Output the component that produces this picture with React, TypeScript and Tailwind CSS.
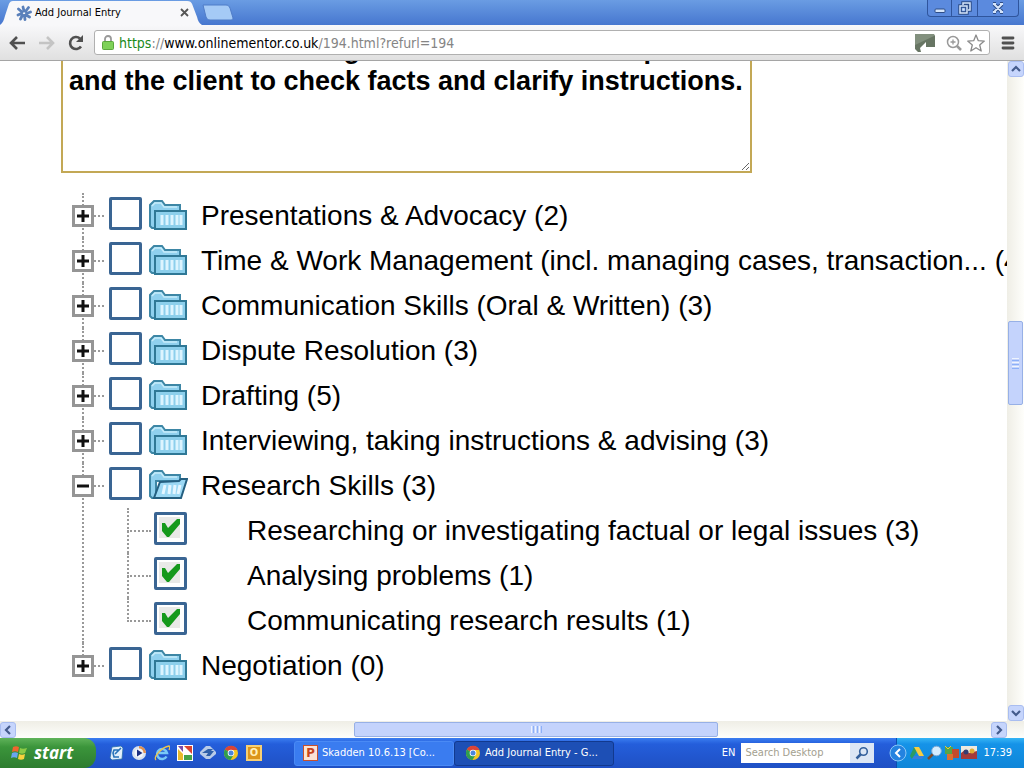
import type { ReactNode } from 'react';

const skills = [
  { name: 'Presentations & Advocacy', count: 2 },
  { name: 'Time & Work Management (incl. managing cases, transaction...', count: 4 },
  { name: 'Communication Skills (Oral & Written)', count: 3 },
  { name: 'Dispute Resolution', count: 3 },
  { name: 'Drafting', count: 5 },
  { name: 'Interviewing, taking instructions & advising', count: 3 },
  {
    name: 'Research Skills',
    count: 3,
    open: true,
    items: [
      { name: 'Researching or investigating factual or legal issues', count: 3 },
      { name: 'Analysing problems', count: 1 },
      { name: 'Communicating research results', count: 1 },
    ],
  },
  { name: 'Negotiation', count: 0 },
];

const notes =
  'I also had one meeting with the trainees and partner\nand the client to check facts and clarify instructions.';

function Folder({ open = false }: { open?: boolean }) {
  return (
    <svg viewBox="0 0 40 32" className="h-8 w-10 shrink-0" aria-hidden="true">
      <path d="M2 28V7l4-4h8l3 4h15v6H8v17H4z" fill="#8fd0ee" stroke="#3d86a5" strokeWidth="2" />
      <path d="M4 8l3-3h6l3 4h13" fill="none" stroke="#c6ebfa" strokeWidth="1.5" />
      {open ? (
        <>
          <path d="M12 14l19-1 2-2h6l-6 19H6z" fill="#9bd8f4" stroke="#245f80" strokeWidth="2" />
          <path d="M17 17l-2 9M22 17l-1 9M27 17l-1 9M32 17l-2 9" stroke="#e4f6ff" strokeWidth="3" />
        </>
      ) : (
        <>
          <path d="M7 13h31v18H7z" fill="#8ccfec" stroke="#2f7896" strokeWidth="2" />
          <path d="M14 17v10M19 17v10M24 17v10M29 17v10M33 17v10" stroke="#dcf4ff" strokeWidth="3" />
        </>
      )}
    </svg>
  );
}

function Check({ label, checked = false }: { label: string; checked?: boolean }) {
  return (
    <span className="relative size-[33px] shrink-0">
      <input
        type="checkbox"
        id={label}
        defaultChecked={checked}
        className="peer block size-full appearance-none rounded-[2px] border-[3px] border-[#3a6593] bg-white"
      />
      <svg viewBox="0 0 33 33" className="pointer-events-none absolute inset-0 hidden peer-checked:block" aria-hidden="true">
        <path d="M5 5h21v21H5z" fill="#e9e9e7" />
        <path d="M8 11h3l3 5 9-9h3v5L15 25h-2l-5-6z" fill="#16991c" />
      </svg>
    </span>
  );
}

function Tree() {
  return (
    <ul className="ml-[72px] mt-5 font-['Liberation_Sans',sans-serif] text-[28px] leading-[45px] text-black">
      {skills.map((skill, i) => (
        <li key={skill.name} className="relative">
          <span
            className={
              i === skills.length - 1
                ? 'absolute left-2.5 top-0 h-6 border-l-2 border-dotted border-[#999]'
                : 'absolute left-2.5 top-0 h-full border-l-2 border-dotted border-[#999]'
            }
          />
          <div className="flex h-[45px] items-center whitespace-nowrap">
            <button
              type="button"
              aria-label={skill.open ? 'Collapse' : 'Expand'}
              className="relative flex size-[22px] shrink-0 items-center justify-center border-[3px] border-[#959595] bg-white"
            >
              <svg viewBox="0 0 16 16" className="size-4 shrink-0" aria-hidden="true">
                <path d={skill.open ? 'M2 8h12' : 'M2 8h12M8 2v12'} stroke="#111" strokeWidth="3" />
              </svg>
            </button>
            <span className="mr-[5px] w-2.5 shrink-0 border-t-2 border-dotted border-[#999]" />
            <span className="mr-[13px] flex shrink-0 items-center gap-1.5 pb-1">
              <Check label={skill.name} />
              <Folder open={skill.open} />
            </span>
            <label htmlFor={skill.name}>
              {skill.name} ({skill.count})
            </label>
          </div>
          {skill.items && (
            <ul className="ml-[55px]">
              {skill.items.map((item, j) => (
                <li key={item.name} className="relative flex h-[45px] items-center whitespace-nowrap">
                  <span
                    className={
                      j === skill.items.length - 1
                        ? 'absolute left-0 top-0 h-6 border-l-2 border-dotted border-[#999]'
                        : 'absolute left-0 top-0 h-full border-l-2 border-dotted border-[#999]'
                    }
                  />
                  <span className="mr-[3px] w-6 shrink-0 border-t-2 border-dotted border-[#999]" />
                  <span className="mr-[60px] flex shrink-0 pb-1">
                    <Check label={item.name} checked />
                  </span>
                  <label htmlFor={item.name}>
                    {item.name} ({item.count})
                  </label>
                </li>
              ))}
            </ul>
          )}
        </li>
      ))}
    </ul>
  );
}

function TitleBar() {
  return (
    <header className="flex h-[25px] shrink-0 items-start bg-gradient-to-b from-[#6a9ce3] to-[#4777cf]">
      <div className="relative h-[25px] w-[202px] shrink-0">
        <svg viewBox="0 0 204 25" className="absolute inset-0 h-full w-full" aria-hidden="true">
          <path d="M0 25c3-2 4-5 5-9l4-12c1-2 2-3 4-3h176c3 0 4 1 5 3l5 13c1 4 2 6 5 8z" fill="#f8f8fa" />
        </svg>
        <div className="relative flex h-full items-center pl-4 pr-[13px]">
          <svg viewBox="0 0 16 16" className="size-4" stroke="#5a80bb" strokeWidth="2.8" strokeLinecap="round" aria-hidden="true">
            <path d="M8 6L7 2M9.500 6.500l3-4M10.500 8.500l4-1.500M10 10l3.500 2M8.500 10.500l.5 4M6.500 10l-2 4M5.500 8.500L2 10M6 7L2.500 4" />
          </svg>
          <span className="ml-[3px] flex-1 whitespace-nowrap text-[11px] leading-4 text-black">Add Journal Entry</span>
          <button type="button" aria-label="Close tab">
            <svg viewBox="0 0 9 9" className="size-[9px]" stroke="#555" strokeWidth="1.8" aria-hidden="true">
              <path d="M1 1l7 7M8 1L1 8" />
            </svg>
          </button>
        </div>
      </div>
      <button type="button" aria-label="New tab" className="mt-1">
        <svg viewBox="0 0 32 17" className="h-[17px] w-8" aria-hidden="true">
          <path d="M1 1h23c2 0 3 1 4 3l3 10c0 1-1 2-2 2H8c-2 0-3-1-4-3z" fill="#a5caf6" stroke="#4f7cc8" />
        </svg>
      </button>
      <div className="ml-auto mr-[5px] flex h-[17px] divide-x divide-[#2f559d] overflow-hidden rounded-b border border-t-0 border-[#2f559d] bg-[#5b8ade]">
        <button type="button" aria-label="Minimise" className="flex w-6 items-center justify-center">
          <svg viewBox="0 0 12 12" className="size-3" aria-hidden="true">
            <rect x="1" y="7" width="10" height="3.500" rx="1" fill="#d5e5fb" stroke="#2d4c87" />
          </svg>
        </button>
        <button type="button" aria-label="Restore" className="flex w-[26px] items-center justify-center">
          <svg viewBox="0 0 14 14" className="size-3.5" fill="none" aria-hidden="true">
            <path d="M5 4V2h7v7h-2M2 5h7v7H2z" stroke="#2d4c87" strokeWidth="3.500" />
            <path d="M5 4V2h7v7h-2M2 5h7v7H2zM5 8h1v1H5z" stroke="#d5e5fb" strokeWidth="1.500" />
          </svg>
        </button>
        <button type="button" aria-label="Close" className="flex w-10 items-center justify-center">
          <svg viewBox="0 0 12 12" className="size-3" aria-hidden="true">
            <path d="M2 2l8 8M10 2l-8 8M1 2h3M8 2h3M1 10h3M8 10h3" stroke="#2d4c87" strokeWidth="4" />
            <path d="M2 2l8 8M10 2l-8 8M1 2h3M8 2h3M1 10h3M8 10h3" stroke="#d5e5fb" strokeWidth="2" />
          </svg>
        </button>
      </div>
    </header>
  );
}

function AddressBar() {
  return (
    <div className="flex h-9 shrink-0 items-center border-b border-[#a5a5a5] bg-gradient-to-b from-[#f8f8fa] to-[#e0e0e0] pl-2 pr-[9px]">
      <button type="button" aria-label="Back" className="w-[30px]">
        <svg viewBox="0 0 18 16" className="h-4 w-[18px]" fill="none" stroke="#505050" strokeWidth="2.600" aria-hidden="true">
          <path d="M17 8H3M9 2L3 8l6 6" />
        </svg>
      </button>
      <button type="button" aria-label="Forward" className="w-[29px]">
        <svg viewBox="0 0 18 16" className="h-4 w-[18px]" fill="none" stroke="#c4c4c4" strokeWidth="2.600" aria-hidden="true">
          <path d="M1 8h14M9 2l6 6-6 6" />
        </svg>
      </button>
      <button type="button" aria-label="Reload" className="w-[27px]">
        <svg viewBox="0 0 18 18" className="size-[18px]" aria-hidden="true">
          <path d="M14 12.500A6 6 0 1 1 13 4.500" fill="none" stroke="#505050" strokeWidth="2.600" />
          <path d="M16 1v7H9z" fill="#505050" />
        </svg>
      </button>
      <div className="flex h-[25px] min-w-0 flex-1 items-center rounded-[3px] border border-[#b0b0b0] bg-white pl-[7px] pr-1">
        <svg viewBox="0 0 12 15" className="h-[15px] w-3 shrink-0" aria-hidden="true">
          <path d="M3 7V4a3 3 0 0 1 6 0v3" fill="none" stroke="#999" strokeWidth="1.800" />
          <rect x=".5" y="6.500" width="11" height="8" rx="1" fill="#7ed158" stroke="#5aa73c" />
        </svg>
        <a href="#address" className="ml-[5px] whitespace-nowrap text-[14px] leading-5 text-[#858585]">
          <span className="text-[#1a8a1a]">https</span>://<span className="text-black">www.onlinementor.co.uk</span>/194.html?refurl=194
        </a>
        <div className="ml-auto flex shrink-0 items-center">
          <svg viewBox="0 0 22 20" className="mr-2.5 h-5 w-[22px]" aria-hidden="true">
            <path d="M1 1h19l1 2v11h-9V9l-6 6 1 4H4l-3-3z" fill="#677563" />
            <path d="M1 1h19v2L1 12z" fill="#82907e" />
          </svg>
          <svg viewBox="0 0 16 16" className="mr-[5px] size-4" fill="none" stroke="#999" aria-hidden="true">
            <circle cx="7" cy="7" r="5.500" strokeWidth="1.500" />
            <path d="M4.500 7h5M7 4.500v5" strokeWidth="1.300" />
            <path d="M11 11l4 4" strokeWidth="2.500" />
          </svg>
          <button type="button" aria-label="Bookmark">
            <svg viewBox="0 0 18 18" className="size-[18px]" fill="none" stroke="#8a8a8a" strokeWidth="1.300" strokeLinejoin="round" aria-hidden="true">
              <path d="M9 1l2.300 5.700 6 .4-4.600 3.900 1.500 6L9 13.700 3.800 17l1.500-6L.7 7.100l6-.4z" />
            </svg>
          </button>
        </div>
      </div>
      <button type="button" aria-label="Menu" className="ml-[11px]">
        <svg viewBox="0 0 14 14" className="size-3.5" stroke="#505050" strokeWidth="2.800" strokeLinecap="round" aria-hidden="true">
          <path d="M2 2h10M2 7h10M2 12h10" />
        </svg>
      </button>
    </div>
  );
}

function ScrollArrow({ d, label }: { d: string; label: string }) {
  return (
    <button
      type="button"
      aria-label={label}
      className="flex size-4 shrink-0 items-center justify-center rounded-[3px] border border-[#a9bdf0] bg-[#c6d5fc]"
    >
      <svg viewBox="0 0 10 10" className="size-2.5" fill="none" stroke="#445b8c" strokeWidth="2.200" aria-hidden="true">
        <path d={d} />
      </svg>
    </button>
  );
}

function TaskButton({ active, icon, children }: { active?: boolean; icon: ReactNode; children: string }) {
  return (
    <button
      type="button"
      className={
        active
          ? 'flex h-[25px] w-40 items-center gap-1 rounded-[3px] border border-[#12398e] bg-[#1d4fb5] pl-2.5 text-left'
          : 'flex h-[25px] w-40 items-center gap-1 rounded-[3px] border border-[#4a8af5] bg-[#3a7cf0] pl-2 text-left'
      }
    >
      {icon}
      <span className="whitespace-nowrap text-[11px] leading-4 text-white">{children}</span>
    </button>
  );
}

function Chrome() {
  return (
    <svg viewBox="0 0 16 16" className="size-4 shrink-0" aria-hidden="true">
      <circle cx="8" cy="8" r="7" fill="#f3c623" />
      <path d="M8 8L1.900 4.500A7 7 0 0 1 14.500 5H8z" fill="#db4437" />
      <path d="M8 8L1.900 4.500A7 7 0 0 0 7.500 15l3-5z" fill="#2f9e4f" />
      <circle cx="8" cy="8" r="3.300" fill="#fff" />
      <circle cx="8" cy="8" r="2.500" fill="#4a86dc" />
    </svg>
  );
}

function QuickLaunch() {
  return (
    <div className="ml-3 flex items-center gap-[7px]">
      <svg viewBox="0 0 16 16" className="size-4" aria-hidden="true">
        <path d="M4 2l9-1 2 2-1 11-10 1-2-2z" fill="#e2f0fb" stroke="#2b6ea8" strokeWidth=".8" />
        <path d="M11 5H6L5 8l1 4h5M7 9l6-6" fill="none" stroke="#2672b8" strokeWidth="1.600" />
      </svg>
      <svg viewBox="0 0 16 16" className="size-4" aria-hidden="true">
        <circle cx="8" cy="8" r="7" fill="#d9e2ee" />
        <path d="M8 1a7 7 0 0 1 7 7h-3a4 4 0 0 0-4-4z" fill="#e09050" />
        <circle cx="8" cy="8" r="4.500" fill="#f3f6fb" />
        <path d="M6 4.500v7L11.500 8z" fill="#1c2f80" />
      </svg>
      <svg viewBox="0 0 16 16" className="size-4" fill="none" aria-hidden="true">
        <path d="M12.500 11.500A5 5 0 1 1 13 8H5" stroke="#78c9f7" strokeWidth="2.500" />
        <path d="M2 15C-1 12 8 2 15 1c1 0 1 2 0 4" stroke="#edc34c" strokeWidth="1.300" />
      </svg>
      <svg viewBox="0 0 16 16" className="size-4" aria-hidden="true">
        <path d="M0 0h16v16H0z" fill="#fff" />
        <path d="M1 1h5v6z" fill="#7b4aa8" />
        <path d="M7 1h8v8z" fill="#d9442e" />
        <path d="M1 4l5 5v6H1z" fill="#e9b92c" />
        <path d="M7 10h8v5H7z" fill="#45a348" />
      </svg>
      <svg viewBox="0 0 16 16" className="size-4" aria-hidden="true">
        <path d="M0 7l6-6h4l6 6v2l-6 5H6L0 9z" fill="#b8cbe8" />
        <path d="M2 8l6-4h5l-2 2h3l-4 5H6l2-3z" fill="#2e5fa9" />
      </svg>
      <Chrome />
      <span className="flex size-4 items-center justify-center border-2 border-[#f7cf73] bg-[#dc951a] text-[11px] font-bold leading-3 text-[#fff0bb]">O</span>
    </div>
  );
}

function Taskbar() {
  return (
    <footer className="flex h-[30px] shrink-0 items-center bg-gradient-to-b from-[#3b7df0] via-[#245edb] via-20% to-[#1f50c4]">
      <button
        type="button"
        className="flex h-full w-24 items-center gap-1.5 rounded-r-xl bg-gradient-to-b from-[#5fb35a] via-[#3b953b] via-30% to-[#2d7c2f] pl-2.5"
      >
        <svg viewBox="0 0 18 18" className="size-[18px]" aria-hidden="true">
          <path d="M3 3c2-1 4-1 6 0L8 8c-2-1-4-1-6 0z" fill="#f0652f" />
          <path d="M10 4c2 1 4 1 7 0l-2 5c-2 1-4 1-6 0z" fill="#8ccb46" />
          <path d="M2 9c2-1 4-1 6 0l-1 5c-2-1-4-1-6 0z" fill="#6aa5f0" />
          <path d="M9 10c2 1 4 1 6 0l-1 5c-2 1-4 1-6 0z" fill="#f9d23d" />
        </svg>
        <span className="font-['Open_Sans',sans-serif] text-[17px] font-bold italic leading-5 text-white">start</span>
      </button>
      <QuickLaunch />
      <div className="ml-8 flex">
        <TaskButton
          icon={
            <span className="flex h-4 w-[15px] shrink-0 items-center justify-center border border-[#c7502d] bg-[#fbe3d5] text-[13px] font-bold leading-4 text-[#c8441b]">
              P
            </span>
          }
        >
          Skadden 10.6.13 [Co...
        </TaskButton>
        <TaskButton active icon={<Chrome />}>
          Add Journal Entry - G...
        </TaskButton>
      </div>
      <span className="ml-auto text-[11px] text-white">EN</span>
      <form className="ml-1.5 flex h-5">
        <input
          type="text"
          aria-label="Search Desktop"
          placeholder="Search Desktop"
          className="w-[109px] bg-white px-1 text-[11px] placeholder:text-[#a3a08f]"
        />
        <button type="button" aria-label="Search" className="flex w-6 items-center justify-center bg-[#dce6f5]">
          <svg viewBox="0 0 14 14" className="size-3.5" fill="none" stroke="#34609c" aria-hidden="true">
            <circle cx="8.500" cy="5.500" r="3.800" strokeWidth="1.600" />
            <path d="M6 8l-4.500 4.500" strokeWidth="2.500" />
          </svg>
        </button>
      </form>
      <div className="ml-[22px] flex h-full items-center border-l border-[#0a4fb0] bg-gradient-to-b from-[#35b5f5] via-[#1593e8] via-20% to-[#0f86d8] pr-3">
        <button type="button" aria-label="Show hidden icons" className="-ml-2 mr-0.5">
          <svg viewBox="0 0 18 18" className="size-[18px]" fill="none" aria-hidden="true">
            <circle cx="9" cy="9" r="8" fill="#2483e0" stroke="#8cc8f7" />
            <path d="M11 5L7 9l4 4" stroke="#fff" strokeWidth="2" />
          </svg>
        </button>
        <svg viewBox="0 0 16 16" className="mr-0.5 size-4" aria-hidden="true">
          <path d="M5 2L1 11l2 3 5-8z" fill="#2c9b62" />
          <path d="M5 2h5l5 9h-5z" fill="#f7cd42" />
          <path d="M5 11h10l-2 3H3z" fill="#397edb" />
        </svg>
        <svg viewBox="0 0 16 16" className="mr-px size-4" aria-hidden="true">
          <path d="M6 9l-5 5" stroke="#7c4d2c" strokeWidth="2.500" />
          <circle cx="9.500" cy="6" r="4.800" fill="#d4edff" stroke="#7fa9d4" />
        </svg>
        <svg viewBox="0 0 16 16" className="mr-px size-4" aria-hidden="true">
          <path d="M1 2h8v7H1z" fill="#55a548" />
          <path d="M8 4h7v9H8z" fill="#c34b2c" />
          <path d="M3 9h6v6H3z" fill="#db7131" />
          <path d="M1 1l3 3 3-3" stroke="#e9c645" fill="none" />
        </svg>
        <svg viewBox="0 0 16 16" className="size-4" aria-hidden="true">
          <path d="M0 1h16v13H0z" fill="#ece9e0" />
          <path d="M0 8l4-3 4 3 8-2v8H0z" fill="#a33b3b" />
          <circle cx="5" cy="7" r="2.500" fill="#333d73" />
          <circle cx="11" cy="6" r="2.500" fill="#dfae34" />
        </svg>
        <time className="ml-1.5 text-[11px] text-white">17:39</time>
      </div>
    </footer>
  );
}

export default function App() {
  return (
    <div className="flex h-screen flex-col overflow-hidden bg-white font-['DejaVu_Sans_Condensed','DejaVu_Sans',sans-serif]">
      <TitleBar />
      <AddressBar />
      <div className="flex min-h-0 flex-1">
        <main className="min-w-0 flex-1 overflow-hidden">
          <textarea
            aria-label="Journal notes"
            defaultValue={notes}
            wrap="off"
            className="-mt-8 ml-[61px] block h-36 w-[691px] resize overflow-hidden border-2 border-[#c3a855] px-1.5 pt-0.5 font-['Liberation_Sans',sans-serif] text-[27px] font-bold leading-8 text-black"
          />
          <Tree />
        </main>
        <div className="flex w-[17px] shrink-0 flex-col items-center bg-gradient-to-r from-[#efeee6] to-[#fefefb]">
          <ScrollArrow d="M1 7l4-4 4 4" label="Scroll up" />
          <div className="flex-[244]" />
          <div className="flex h-[84px] w-[15px] flex-col items-center justify-center gap-px rounded-[2px] border border-[#97b0e6] bg-[#c4d3fc]">
            <span className="h-px w-[7px] bg-[#eef4fe]" />
            <span className="h-px w-[7px] bg-[#8cb0f8]" />
            <span className="h-px w-[7px] bg-[#eef4fe]" />
            <span className="h-px w-[7px] bg-[#8cb0f8]" />
            <span className="h-px w-[7px] bg-[#eef4fe]" />
            <span className="h-px w-[7px] bg-[#8cb0f8]" />
          </div>
          <div className="flex-[299]" />
          <ScrollArrow d="M1 3l4 4 4-4" label="Scroll down" />
        </div>
      </div>
      <div className="flex h-[17px] shrink-0 items-center bg-gradient-to-b from-[#efeee6] to-[#fefefb] pr-[17px]">
        <ScrollArrow d="M7 1L3 5l4 4" label="Scroll left" />
        <div className="flex-[338]" />
        <div className="flex h-[15px] w-[364px] items-center justify-center gap-px rounded-[2px] border border-[#97b0e6] bg-[#c4d3fc]">
          <span className="h-[7px] w-px bg-[#eef4fe]" />
          <span className="h-[7px] w-px bg-[#8cb0f8]" />
          <span className="h-[7px] w-px bg-[#eef4fe]" />
          <span className="h-[7px] w-px bg-[#8cb0f8]" />
          <span className="h-[7px] w-px bg-[#eef4fe]" />
          <span className="h-[7px] w-px bg-[#8cb0f8]" />
        </div>
        <div className="flex-[273]" />
        <ScrollArrow d="M3 1l4 4-4 4" label="Scroll right" />
      </div>
      <Taskbar />
    </div>
  );
}
